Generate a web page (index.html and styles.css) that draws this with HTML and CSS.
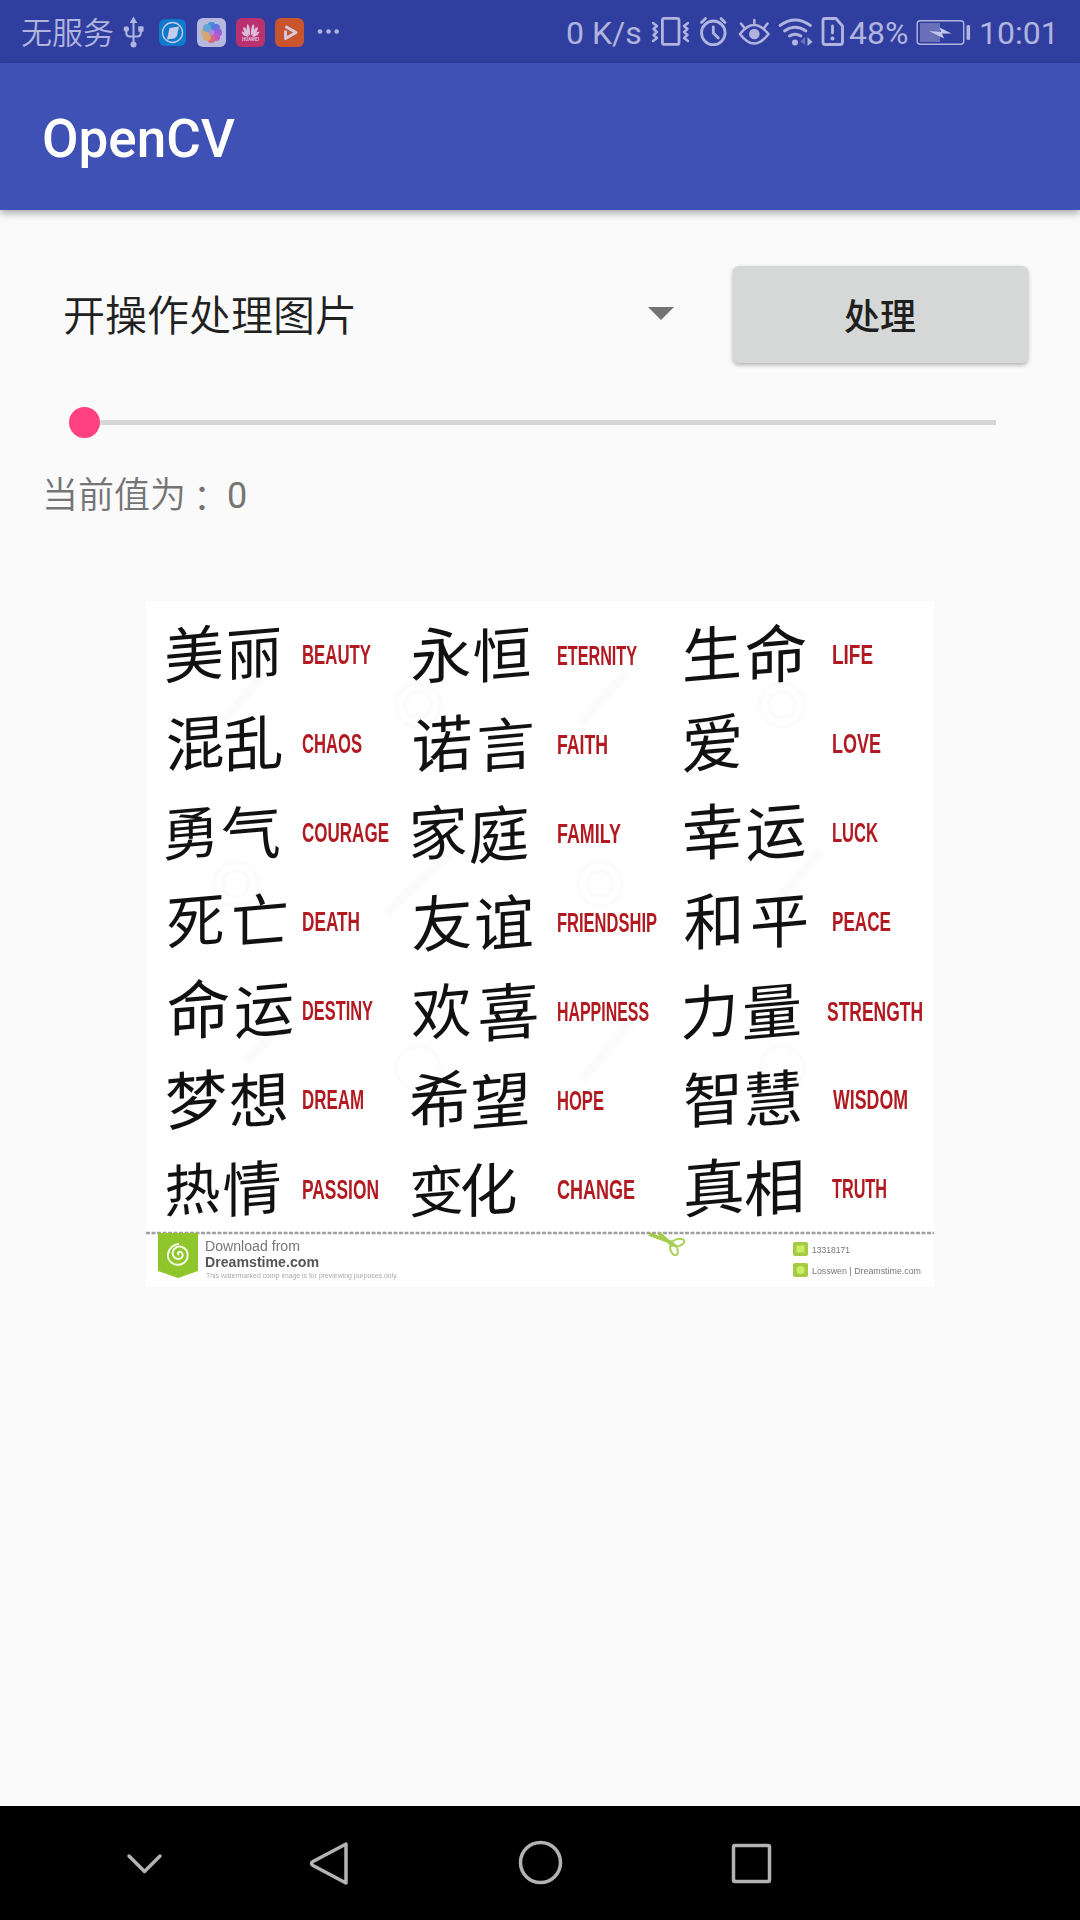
FILE: index.html
```html
<!DOCTYPE html>
<html lang="zh-CN">
<head>
<meta charset="utf-8">
<title>OpenCV</title>
<link rel="stylesheet" href="styles.css">
</head>
<body>
<div class="screen">
  <header class="status">
    <span class="carrier">无服务</span>
    <svg class="status-left" width="226" height="63" viewBox="118 0 226 63">
      <g fill="none" stroke="#b0b4de" stroke-width="2">
        <path d="M133.500 20V45M126.300 30v3q0 3.500 4 3.500h6.500q4 0 4-3.500v-3"/>
      </g>
      <g fill="#b0b4de">
        <path d="M133.500 16.500l3.800 6.500h-7.600z"/><circle cx="133.500" cy="44.600" r="3"/><circle cx="126.300" cy="29" r="2.700"/><rect x="138.200" y="26.300" width="5.400" height="5.400" rx="1"/>
        <circle cx="320" cy="31.500" r="2.300"/><circle cx="328.500" cy="31.500" r="2.300"/><circle cx="336.700" cy="31.500" r="2.300"/>
      </g>
      <rect x="159" y="19" width="27" height="27" rx="6" fill="#0f7acb"/>
      <circle cx="172.500" cy="32.500" r="10" fill="none" stroke="#c5cbed" stroke-width="1.300"/>
      <path d="M169.500 28l9.500-1.500-2 9.500-2.500 2.500-7.500 1z" fill="#c5cbed"/>
      <rect x="197" y="18" width="29" height="29" rx="6" fill="#b4b9dd"/>
      <g opacity=".85">
        <circle cx="211.500" cy="26" r="4" fill="#2f8ae0"/><circle cx="216" cy="28" r="4" fill="#5068dc"/><circle cx="218" cy="32.500" r="4" fill="#8c52dd"/><circle cx="216" cy="37" r="4" fill="#c244c5"/><circle cx="211.500" cy="39" r="4" fill="#df5b73"/><circle cx="207" cy="37" r="4" fill="#e0a05a"/><circle cx="205" cy="32.500" r="4" fill="#d9a76a"/><circle cx="207" cy="28" r="4" fill="#56a3d2"/><circle cx="211.500" cy="32.500" r="3" fill="#a885d4"/>
      </g>
      <rect x="236" y="18" width="29" height="29" rx="6" fill="#b9326e"/>
      <g fill="#dcc0dc">
        <path d="M250 36q-5-7-2.500-12 3 2 2.500 12zM251 36q5-7 2.500-12-3 2-2.500 12zM249 36.500q-7-5-5.500-9.500 4 1 5.500 9.500zM252 36.500q7-5 5.500-9.500-4 1-5.500 9.500zM248.500 37q-6-1-7-5.500 4 0 7 5.500zM252.500 37q6-1 7-5.500-4 0-7 5.500z"/>
      </g>
      <text class="logo-word" x="242" y="41" textLength="17" lengthAdjust="spacingAndGlyphs">HUAWEI</text>
      <rect x="275" y="18" width="29" height="29" rx="6" fill="#c9552f"/>
      <path d="M285.500 26.500l10.500 6-10.500 6v-8" fill="none" stroke="#d8cbe0" stroke-width="2.800" stroke-linejoin="round"/>
    </svg>
    <span class="speed">0 K/s</span>
    <svg class="status-icons" width="196" height="63" viewBox="650 0 196 63">
      <g fill="none" stroke="#b0b4de" stroke-width="2.800" stroke-linecap="round" stroke-linejoin="round">
        <rect x="662.400" y="18.400" width="16.600" height="26" rx="2"/>
        <path d="M653 23l4 3-3.500 3 3.500 3-3.500 3 3.500 3-4 3M688 23l-4 3 3.500 3-3.500 3 3.500 3-3.500 3 4 3" stroke-width="2.400"/>
        <circle cx="713.300" cy="32.800" r="11.800"/>
        <path d="M713.300 27v6l5 5M701.500 22.500l4-4M725 22.500l-4-4"/>
        <path d="M740 34q14-18 28.500 0-14.500 19-28.500 0zM754.300 20v5M741 23.500l3 4M767.500 23.500l-3 4" stroke-width="2.500"/>
        <path d="M780 25.500q15-11 30.500 0M784.500 31q10.500-7.500 21.500 0M789.500 36q5.500-3.500 11.500 0"/>
        <path d="M825 18.500h11l6.500 7.500v16q0 2.500-2.500 2.500h-15q-2 0-2-2.500v-21.500q0-2 2-2zM832.500 26v7"/>
      </g>
      <g fill="#b0b4de"><circle cx="754.300" cy="34" r="5.300"/><circle cx="795" cy="42.500" r="3"/><circle cx="832.500" cy="38.500" r="2"/><path d="M807.500 37l5 5-5 4z"/><path d="M805 37v8l-4.500-3.500z" opacity=".45"/></g>
    </svg>
    <span class="percent">48%</span>
    <svg class="battery" width="56" height="63" viewBox="916 0 56 63">
      <rect x="917.200" y="20.800" width="46.500" height="23.500" rx="3" fill="none" stroke="#b0b4de" stroke-width="1.400"/>
      <rect x="920" y="23" width="20" height="19" fill="#6970b8"/>
      <path d="M929 31l12 1-1.500-4.500 12 6-9.500 0 2 5z" fill="#c2c6e8"/>
      <rect x="966.500" y="25" width="3.600" height="15" rx="1.500" fill="#b0b4de"/>
    </svg>
    <span class="clock">10:01</span>
  </header>
  <div class="appbar"><h1 class="title">OpenCV</h1></div>
  <main class="content">
    <div class="controls">
      <div class="spinner"><span class="choice">开操作处理图片</span><svg width="26" height="13" viewBox="0 0 26 13"><path d="M0 0h26L13 13z" fill="#737373"/></svg></div>
      <button class="process">处理</button>
    </div>
    <div class="seekbar"><span class="thumb"></span><span class="track"></span></div>
    <p class="value"><span>当前值为</span><span class="colon">：</span><span class="number">0</span></p>
    <svg class="picture" width="788" height="686" viewBox="0 0 788 686">
      <rect width="788" height="686" fill="#fff"/>
      <g class="watermark">
        <circle cx="272" cy="104" r="22"/><circle cx="272" cy="104" r="13"/><circle cx="636" cy="104" r="22"/><circle cx="636" cy="104" r="13"/>
        <circle cx="90" cy="283" r="22"/><circle cx="90" cy="283" r="13"/><circle cx="454" cy="283" r="22"/><circle cx="454" cy="283" r="13"/>
        <circle cx="272" cy="467" r="22"/><circle cx="636" cy="467" r="22"/>
        <path class="streak" d="M75 122l45-50M435 122l45-50M240 312l65-60M630 300l45-50M100 460l40-40M435 480l50-60"/>
      </g>
      <g class="hanzi">
        <text x="48" y="75.500" font-size="60">美</text><text x="108" y="72.500" font-size="56">丽</text>
        <text x="295" y="76.500" font-size="61">永</text><text x="356" y="75.500" font-size="59">恒</text>
        <text x="566" y="75.500" font-size="60">生</text><text x="630" y="76.500" font-size="63">命</text>
        <text x="49" y="164" font-size="59">混</text><text x="107.500" y="165" font-size="60">乱</text>
        <text x="296" y="166" font-size="61">诺</text><text x="359.500" y="165" font-size="58">言</text>
        <text x="566.500" y="165" font-size="62">爱</text>
        <text x="45" y="253" font-size="57">勇</text><text x="105" y="254.500" font-size="60">气</text>
        <text x="292" y="253.500" font-size="59">家</text><text x="353" y="256" font-size="61">庭</text>
        <text x="566.500" y="253.500" font-size="61">幸</text><text x="630" y="253" font-size="61">运</text>
        <text x="49.500" y="341.500" font-size="58">死</text><text x="114" y="341" font-size="58">亡</text>
        <text x="296" y="344.500" font-size="61">友</text><text x="358" y="344.500" font-size="60">谊</text>
        <text x="568" y="342.500" font-size="61">和</text><text x="633.500" y="342" font-size="59">平</text>
        <text x="52.500" y="432.500" font-size="64">命</text><text x="118" y="431" font-size="60">运</text>
        <text x="295.500" y="433" font-size="60">欢</text><text x="362.500" y="434" font-size="62">喜</text>
        <text x="563.500" y="432" font-size="58">力</text><text x="626" y="433" font-size="60">量</text>
        <text x="50" y="521.500" font-size="62">梦</text><text x="113" y="521.500" font-size="60">想</text>
        <text x="293.500" y="521.500" font-size="61">希</text><text x="354.500" y="522" font-size="60">望</text>
        <text x="567" y="520.500" font-size="60">智</text><text x="627" y="520" font-size="60">慧</text>
        <text x="46.500" y="609" font-size="56">热</text><text x="106" y="609.500" font-size="59">情</text>
        <text x="290.500" y="610" font-size="55">变</text><text x="342.500" y="610" font-size="58">化</text>
        <text x="568" y="609.500" font-size="62">真</text><text x="628.500" y="609" font-size="61">相</text>
      </g>
      <g class="words">
        <text x="156" y="63" textLength="69" lengthAdjust="spacingAndGlyphs">BEAUTY</text>
        <text x="411" y="64" textLength="80" lengthAdjust="spacingAndGlyphs">ETERNITY</text>
        <text x="686" y="63" textLength="41" lengthAdjust="spacingAndGlyphs">LIFE</text>
        <text x="156" y="152" textLength="60" lengthAdjust="spacingAndGlyphs">CHAOS</text>
        <text x="411" y="153" textLength="51" lengthAdjust="spacingAndGlyphs">FAITH</text>
        <text x="686" y="152" textLength="49" lengthAdjust="spacingAndGlyphs">LOVE</text>
        <text x="156" y="241" textLength="87" lengthAdjust="spacingAndGlyphs">COURAGE</text>
        <text x="411" y="242" textLength="64" lengthAdjust="spacingAndGlyphs">FAMILY</text>
        <text x="686" y="241" textLength="46" lengthAdjust="spacingAndGlyphs">LUCK</text>
        <text x="156" y="330" textLength="58" lengthAdjust="spacingAndGlyphs">DEATH</text>
        <text x="411" y="331" textLength="100" lengthAdjust="spacingAndGlyphs">FRIENDSHIP</text>
        <text x="686" y="330" textLength="59" lengthAdjust="spacingAndGlyphs">PEACE</text>
        <text x="156" y="419" textLength="71" lengthAdjust="spacingAndGlyphs">DESTINY</text>
        <text x="411" y="420" textLength="92" lengthAdjust="spacingAndGlyphs">HAPPINESS</text>
        <text x="681" y="420" textLength="96" lengthAdjust="spacingAndGlyphs">STRENGTH</text>
        <text x="156" y="508" textLength="62" lengthAdjust="spacingAndGlyphs">DREAM</text>
        <text x="411" y="509" textLength="47" lengthAdjust="spacingAndGlyphs">HOPE</text>
        <text x="687" y="508" textLength="75" lengthAdjust="spacingAndGlyphs">WISDOM</text>
        <text x="156" y="598" textLength="77" lengthAdjust="spacingAndGlyphs">PASSION</text>
        <text x="411" y="598" textLength="78" lengthAdjust="spacingAndGlyphs">CHANGE</text>
        <text x="686" y="597" textLength="55" lengthAdjust="spacingAndGlyphs">TRUTH</text>
      </g>
      <path d="M0 632H788" stroke="#a0a0a0" stroke-width="2.500" stroke-dasharray="4 1.500"/>
      <g class="credit">
        <path d="M12 632h40v38l-20 7-20-7z" fill="#8fc62b"/>
        <path d="M33 654c-3-2 1-5 3-2 3 5-4 8-8 4-4-6 2-12 8-10 8 3 7 14 0 17-8 3-15-3-14-10 1-6 6-10 11-10" fill="none" stroke="#f3fae5" stroke-width="2"/>
        <text x="59" y="650" font-size="14" textLength="95" lengthAdjust="spacingAndGlyphs">Download from</text>
        <text x="59" y="666" font-size="14" font-weight="700" fill="#555" textLength="114" lengthAdjust="spacingAndGlyphs">Dreamstime.com</text>
        <text x="60" y="677" font-size="7" fill="#aaa" textLength="192" lengthAdjust="spacingAndGlyphs">This watermarked comp image is for previewing purposes only.</text>
        <path d="M503 633l24 9M513 632l14 13" stroke="#a3cc4a" stroke-width="3.500"/>
        <g fill="none" stroke="#a9d055" stroke-width="2"><ellipse cx="532" cy="641.500" rx="6.500" ry="3.500" transform="rotate(-15 532 641.500)"/><ellipse cx="528" cy="648.500" rx="3.500" ry="6" transform="rotate(-20 528 648.500)"/></g>
        <g fill="#a3cc45"><rect x="647" y="641" width="15" height="14" rx="2"/><rect x="647" y="662" width="15" height="14" rx="2"/></g>
        <g fill="#cdec62"><rect x="650.500" y="644.500" width="8" height="7" rx="1"/><circle cx="654.500" cy="669" r="4"/></g>
        <text x="666" y="652" font-size="9" textLength="38" lengthAdjust="spacingAndGlyphs">13318171</text>
        <text x="666" y="673" font-size="9" textLength="109" lengthAdjust="spacingAndGlyphs">Losswen | Dreamstime.com</text>
      </g>
    </svg>
  </main>
  <nav class="navbar">
    <svg width="1080" height="114" viewBox="0 1806 1080 114" fill="none" stroke="#b3b3b3" stroke-width="3.500" stroke-linejoin="round" stroke-linecap="round">
      <path d="M129 1856l15.500 15.500 15.500-15.500"/>
      <path d="M346 1844v39l-33-17.500q-3-2 0-4z"/>
      <circle cx="540.500" cy="1862.500" r="20"/>
      <rect x="733.500" y="1845.500" width="36" height="36" rx="1.500"/>
    </svg>
  </nav>
</div>
</body>
</html>
```
FILE: styles.css
```css
* { box-sizing: border-box; }
body { margin: 0; background: #fafafa; font-family: Roboto, "Noto Sans CJK SC", sans-serif; }
svg { display: block; flex: none; }
.screen { width: 1080px; height: 1920px; display: flex; flex-direction: column; overflow: hidden; }
.status { height: 63px; flex: none; display: flex; align-items: center; background: #303f9f; color: #b0b4de; font-size: 32px; line-height: 38px; white-space: nowrap; padding-left: 21px; }
.status > span { padding-top: 2px; }
.status .carrier { width: 97px; padding-top: 5px; font-size: 31px; font-weight: 350; }
.logo-word { font: 700 5px Roboto, sans-serif; fill: #dcc0dc; }
.speed { width: 84px; margin-left: 222px; }
.percent { width: 66px; padding-left: 3px; }
.battery { margin-left: 4px; }
.clock { margin-left: 7px; }
.appbar { height: 147px; flex: none; display: flex; align-items: center; padding: 4px 0 0 42px; background: #3f51b5; box-shadow: 0 3px 8px rgba(0,0,0,.35); z-index: 1; }
.title { margin: 0; color: #fff; font-size: 53px; font-weight: 500; line-height: 62px; }
.content { flex: 1; padding: 56px 51px 0 42px; display: flex; flex-direction: column; }
.controls { display: flex; justify-content: space-between; height: 97px; }
.spinner { width: 632px; display: flex; align-items: center; justify-content: space-between; padding: 0 0 2px 21px; font-size: 42px; font-weight: 350; color: #212121; }
.choice { padding-bottom: 2px; }
.process { width: 295px; height: 97px; margin-right: 1px; padding: 0 1px 1px 0; border: 0; border-radius: 6px; background: #d6d7d7; box-shadow: 0 2px 4px rgba(0,0,0,.3); color: #1f1f1f; font: 500 36px Roboto, "Noto Sans CJK SC", sans-serif; }
.seekbar { display: flex; align-items: center; height: 32px; margin: 43px 33px 0 27px; }
.thumb { width: 31px; height: 31px; border-radius: 50%; background: #ff4081; }
.track { flex: 1; height: 5px; background: #d6d6d6; }
.value { display: flex; margin: 31px 0 0; height: 54px; line-height: 54px; font-size: 36px; font-weight: 350; color: #757575; }
.colon { width: 41px; padding: 2px 0 0 7px; }
.number { font-weight: 400; }
.picture { margin: 78px 0 0 104px; }
.hanzi { font-family: "Noto Sans CJK SC", sans-serif; fill: #111; text-anchor: middle; filter: blur(.7px); }
.hanzi text { transform-box: fill-box; transform-origin: center; transform: skewY(-5deg); }
.words { font: 700 27px "Liberation Sans", sans-serif; fill: #b01a20; filter: blur(.7px); }
.credit { font-family: "Liberation Sans", sans-serif; fill: #777; filter: blur(.6px); }
.watermark { fill: none; stroke: #fbfbfb; stroke-width: 4; filter: blur(1px); }
.streak { stroke-width: 10; }
.navbar { height: 114px; flex: none; background: #000; }
```
